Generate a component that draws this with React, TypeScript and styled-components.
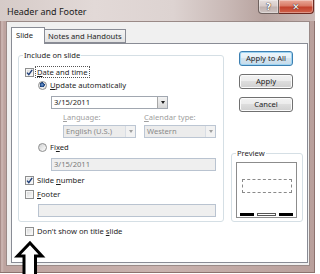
import React from 'react';
import styled, { createGlobalStyle } from 'styled-components';

const Global = createGlobalStyle`
  html, body { margin: 0; padding: 0; background: #ffffff; }
  body {
    width: 320px; height: 274px; overflow: hidden;
    font-family: "Noto Sans", "Open Sans", sans-serif;
    font-size: 7.6px; color: #1e1e1e;
  }
`;

const Page = styled.div`
  position: relative;
  width: 320px;
  height: 274px;
  background: #ffffff;
  overflow: hidden;
`;

const Window = styled.div`
  width: 315px;
  height: 273px;
  display: flex;
  flex-direction: column;
  background: linear-gradient(90deg, #b59c98 0px, #cdb7b3 2px, #bda39f 4px, #c9b2ae 50%, #b9a09c 100%);
  box-shadow: inset -1px -1px 0 #8c726e, inset 1px 0 0 #a88e8a;
`;

const TitleBar = styled.div`
  height: 21px;
  flex: none;
  display: flex;
  align-items: flex-start;
  background: linear-gradient(90deg, #d6cbc8 0%, #e2d9d7 30%, #ddd3d1 55%, #c9b9b6 72%, #b7a29e 84%, #cbbab7 100%);
`;

const Title = styled.div`
  padding: 6px 0 0 7px;
  flex: 1;
  font-size: 9px;
  line-height: 12px;
  color: #1a1a1a;
`;

const CaptionButtons = styled.div`
  display: flex;
  margin-right: 1px;
`;

const CaptionButton = styled.div<{ $close?: boolean }>`
  width: ${(p) => (p.$close ? 35 : 21)}px;
  height: 14px;
  box-sizing: border-box;
  border: 1px solid ${(p) => (p.$close ? '#6e2a22' : '#6f625f')};
  border-top: none;
  ${(p) => (p.$close ? 'border-left: none; border-radius: 0 0 4px 0;' : 'border-radius: 0 0 0 4px;')}
  background: ${(p) =>
    p.$close
      ? 'linear-gradient(180deg, #e9a999 0%, #d97a66 45%, #c2412c 55%, #d0614a 100%)'
      : 'linear-gradient(180deg, #e6dedc 0%, #d7ccca 45%, #c1b3b0 55%, #cfc4c2 100%)'};
  box-shadow: inset 0 0 0 1px rgba(255, 255, 255, 0.35);
  display: flex;
  align-items: center;
  justify-content: center;
  color: #ffffff;
  font-family: "DejaVu Sans", sans-serif;
  font-weight: bold;
  font-size: 9px;
  line-height: 12px;
  text-shadow: 0 0 1px #3a2a28, 0 0 1px #3a2a28;
`;

const Client = styled.div`
  flex: 1;
  margin: 0 5px 7px 6px;
  background: #f0f0f0;
  border: 1px solid #9a8a87;
  display: flex;
  flex-direction: column;
  padding: 5px 1px 2px 4px;
  min-height: 0;
`;

const Tabs = styled.div`
  display: flex;
  align-items: flex-end;
  height: 17px;
  position: relative;
  z-index: 1;
  margin-bottom: -1px;
`;

const Tab = styled.div<{ $active?: boolean }>`
  box-sizing: border-box;
  height: ${(p) => (p.$active ? 17 : 14)}px;
  margin-bottom: ${(p) => (p.$active ? 0 : 1)}px;
  border: 1px solid #898c95;
  ${(p) => (p.$active ? 'border-bottom: none;' : 'border-left: none;')}
  background: ${(p) => (p.$active ? '#ffffff' : 'linear-gradient(180deg, #f4f4f4 0%, #ececec 50%, #e2e2e2 100%)')};
  padding: ${(p) => (p.$active ? '2px 11px 0 4px' : '1px 3px 0 3px')};
  line-height: 11px;
`;

const Panel = styled.div`
  flex: 1;
  background: #ffffff;
  border: 1px solid #898c95;
  display: flex;
  gap: 7px;
  padding: 6px 3px 0 6px;
`;

const LeftCol = styled.div`
  width: 206px;
  display: flex;
  flex-direction: column;
`;

const Group = styled.fieldset`
  margin: 0;
  box-sizing: border-box;
  border: 1px solid #d5dfe5;
  border-radius: 3px;
  padding: 0 0 4px 6px;
  display: flex;
  flex-direction: column;
  min-width: 0;
`;

const PreviewGroup = styled(Group)`
  padding: 0 5px 3px 4px;
  margin-top: 36px;
  width: 72px;
`;

const Legend = styled.legend`
  padding: 0 1px;
  margin-left: -2px;
  line-height: 10px;
  color: #1e1e1e;
`;

const PreviewLegend = styled(Legend)`
  margin-left: 0;
`;

const Row = styled.div<{ $indent?: number; $mt?: number }>`
  display: flex;
  align-items: center;
  height: 12px;
  margin-left: ${(p) => p.$indent ?? 0}px;
  margin-top: ${(p) => p.$mt ?? 0}px;
  gap: 2px;
  flex: none;
`;

const Label = styled.span<{ $focus?: boolean }>`
  line-height: 10px;
  padding: 0 1px;
  white-space: nowrap;
  color: #1e1e1e;
  outline: ${(p) => (p.$focus ? '1px dotted #555' : 'none')};
  outline-offset: 0;
`;

const Key = styled.span`
  text-decoration: underline;
  text-underline-offset: 1px;
`;

const Box = styled.span`
  width: 9px;
  height: 9px;
  box-sizing: border-box;
  border: 1px solid #8e8f8f;
  background: linear-gradient(135deg, #d4d5d6 0%, #eeeeee 60%, #fbfbfb 100%);
  box-shadow: inset 0 0 0 1px #f6f6f6;
  display: inline-flex;
  align-items: center;
  justify-content: center;
  flex: none;
`;

const Radio = styled.span<{ $on?: boolean }>`
  width: 9px;
  height: 9px;
  box-sizing: border-box;
  border-radius: 50%;
  border: 1px solid #8e8f8f;
  background: ${(p) =>
    p.$on
      ? 'radial-gradient(circle at 45% 40%, #7fa6d6 0px, #2b5899 1.6px, #1b3c70 2.4px, #e6e6e6 2.6px, #f5f5f5 100%)'
      : 'linear-gradient(135deg, #cfd0d1 0%, #ececec 60%, #fafafa 100%)'};
  flex: none;
`;

const Combo = styled.div<{ $w: number; $indent?: number; $disabled?: boolean; $mt?: number }>`
  box-sizing: border-box;
  width: ${(p) => p.$w}px;
  height: 13px;
  margin-left: ${(p) => p.$indent ?? 0}px;
  margin-top: ${(p) => p.$mt ?? 0}px;
  border: 1px solid ${(p) => (p.$disabled ? '#bcc6d3' : '#a1a7b0')};
  background: ${(p) => (p.$disabled ? '#ececec' : '#ffffff')};
  display: flex;
  align-items: center;
  flex: none;
`;

const ComboText = styled.span<{ $disabled?: boolean }>`
  flex: 1;
  padding-left: 2px;
  line-height: 11px;
  color: ${(p) => (p.$disabled ? '#8a8a8a' : '#1e1e1e')};
  white-space: nowrap;
  overflow: hidden;
`;

const DropButton = styled.span<{ $disabled?: boolean }>`
  box-sizing: border-box;
  width: 10px;
  height: 11px;
  border-left: 1px solid ${(p) => (p.$disabled ? '#d8dde4' : '#a7a7a7')};
  background: ${(p) => (p.$disabled ? '#f2f2f2' : 'linear-gradient(180deg, #f2f2f2 0%, #e6e6e6 50%, #d6d6d6 100%)')};
  display: flex;
  align-items: center;
  justify-content: center;
  &::after {
    content: '';
    border-left: 2.5px solid transparent;
    border-right: 2.5px solid transparent;
    border-top: 3px solid ${(p) => (p.$disabled ? '#a0a0a0' : '#1e1e1e')};
  }
`;

const TextInput = styled.div<{ $w: number; $indent: number; $mt: number }>`
  box-sizing: border-box;
  width: ${(p) => p.$w}px;
  height: 13px;
  margin-left: ${(p) => p.$indent}px;
  margin-top: ${(p) => p.$mt}px;
  border: 1px solid #b9c3d0;
  background: #efefef;
  color: #7a7a7a;
  padding-left: 2px;
  line-height: 11px;
  flex: none;
`;

const LabelPair = styled.div`
  display: grid;
  grid-template-columns: 73px 72px;
  column-gap: 8px;
  margin-left: 38px;
`;

const SmallLabel = styled.div<{ $mt?: number }>`
  height: 10px;
  line-height: 10px;
  color: #a0a0a0;
  margin-top: ${(p) => p.$mt ?? 0}px;
`;

const RightCol = styled.div`
  width: 72px;
  display: flex;
  flex-direction: column;
`;

const Button = styled.div<{ $default?: boolean }>`
  box-sizing: border-box;
  width: 54px;
  height: 15px;
  margin-left: 8px;
  margin-top: ${(p) => (p.$default ? 1 : 8)}px;
  border: 1px solid ${(p) => (p.$default ? '#3c7fb1' : '#707070')};
  border-radius: 3px;
  background: ${(p) =>
    p.$default
      ? 'linear-gradient(180deg, #eef6fb 0%, #e3eef6 50%, #d3e3ee 50%, #c6dbea 100%)'
      : 'linear-gradient(180deg, #f2f2f2 0%, #ebebeb 50%, #dddddd 50%, #cfcfcf 100%)'};
  box-shadow: inset 0 0 0 1px ${(p) => (p.$default ? '#9fd4f2' : '#fbfbfb')};
  display: flex;
  align-items: center;
  justify-content: center;
  line-height: 11px;
  color: #1e1e1e;
`;

const PreviewBox = styled.div`
  box-sizing: border-box;
  margin-top: 4px;
  width: 61px;
  height: 56px;
  border: 1px solid #8c8c8c;
  background: #ffffff;
  display: flex;
  flex-direction: column;
  padding: 16px 3px 1px 3px;
`;

const Placeholder = styled.div`
  box-sizing: border-box;
  margin-left: 2px;
  width: 50px;
  height: 14px;
  border: 1px dashed #8a8a8a;
`;

const Bars = styled.div`
  margin-top: auto;
  display: flex;
  gap: 3px;
`;

const Bar = styled.span<{ $w: number; $hollow?: boolean }>`
  box-sizing: border-box;
  width: ${(p) => p.$w}px;
  height: 3px;
  background: ${(p) => (p.$hollow ? '#ffffff' : '#000000')};
  border: ${(p) => (p.$hollow ? '1px solid #555555' : 'none')};
`;

const Arrow = styled.svg`
  position: absolute;
  left: 0;
  top: 230px;
  width: 60px;
  height: 44px;
  overflow: visible;
`;

const Check = () => (
  <svg width="7" height="7" viewBox="0 0 7 7">
    <path d="M1 3.6 L2.8 5.6 L6.2 0.8" fill="none" stroke="#1f3f7a" strokeWidth="1.4" />
  </svg>
);

export default function App() {
  return (
    <Page>
      <Global />
      <Window>
        <TitleBar>
          <Title>Header and Footer</Title>
          <CaptionButtons>
            <CaptionButton>?</CaptionButton>
            <CaptionButton $close>✕</CaptionButton>
          </CaptionButtons>
        </TitleBar>
        <Client>
          <Tabs>
            <Tab $active>Slide</Tab>
            <Tab>Notes and Handouts</Tab>
          </Tabs>
          <Panel>
            <LeftCol>
              <Group>
                <Legend>Include on slide</Legend>
                <Row $mt={6}>
                  <Box><Check /></Box>
                  <Label $focus><Key>D</Key>ate and time</Label>
                </Row>
                <Row $indent={13} $mt={1}>
                  <Radio $on />
                  <Label><Key>U</Key>pdate automatically</Label>
                </Row>
                <Combo $w={117} $indent={26} $mt={5}>
                  <ComboText>3/15/2011</ComboText>
                  <DropButton />
                </Combo>
                <LabelPair>
                  <SmallLabel $mt={3}><Key>L</Key>anguage:</SmallLabel>
                  <SmallLabel $mt={3}><Key>C</Key>alendar type:</SmallLabel>
                  <Combo $w={73} $disabled $mt={3}>
                    <ComboText $disabled>English (U.S.)</ComboText>
                    <DropButton $disabled />
                  </Combo>
                  <Combo $w={72} $disabled $mt={3}>
                    <ComboText $disabled>Western</ComboText>
                    <DropButton $disabled />
                  </Combo>
                </LabelPair>
                <Row $indent={13} $mt={3}>
                  <Radio />
                  <Label>Fi<Key>x</Key>ed</Label>
                </Row>
                <TextInput $w={165} $indent={26} $mt={5}>3/15/2011</TextInput>
                <Row $mt={3}>
                  <Box><Check /></Box>
                  <Label>Slide <Key>n</Key>umber</Label>
                </Row>
                <Row $mt={2}>
                  <Box />
                  <Label><Key>F</Key>ooter</Label>
                </Row>
                <TextInput $w={178} $indent={13} $mt={4}></TextInput>
              </Group>
              <Row $indent={7} $mt={3}>
                <Box />
                <Label>Don't show on title <Key>s</Key>lide</Label>
              </Row>
            </LeftCol>
            <RightCol>
              <Button $default>Apply to All</Button>
              <Button>Apply</Button>
              <Button>Cancel</Button>
              <PreviewGroup>
                <PreviewLegend>Preview</PreviewLegend>
                <PreviewBox>
                  <Placeholder />
                  <Bars>
                    <Bar $w={14} />
                    <Bar $w={19} $hollow />
                    <Bar $w={14} />
                  </Bars>
                </PreviewBox>
              </PreviewGroup>
            </RightCol>
          </Panel>
        </Client>
      </Window>
      <Arrow viewBox="0 0 60 44">
        <polygon
          points="30,13 42,26 35.5,26 35.5,48 24,48 24,26 17.5,26"
          fill="#ffffff"
          stroke="#000000"
          strokeWidth="3"
          strokeLinejoin="miter"
        />
      </Arrow>
    </Page>
  );
}
